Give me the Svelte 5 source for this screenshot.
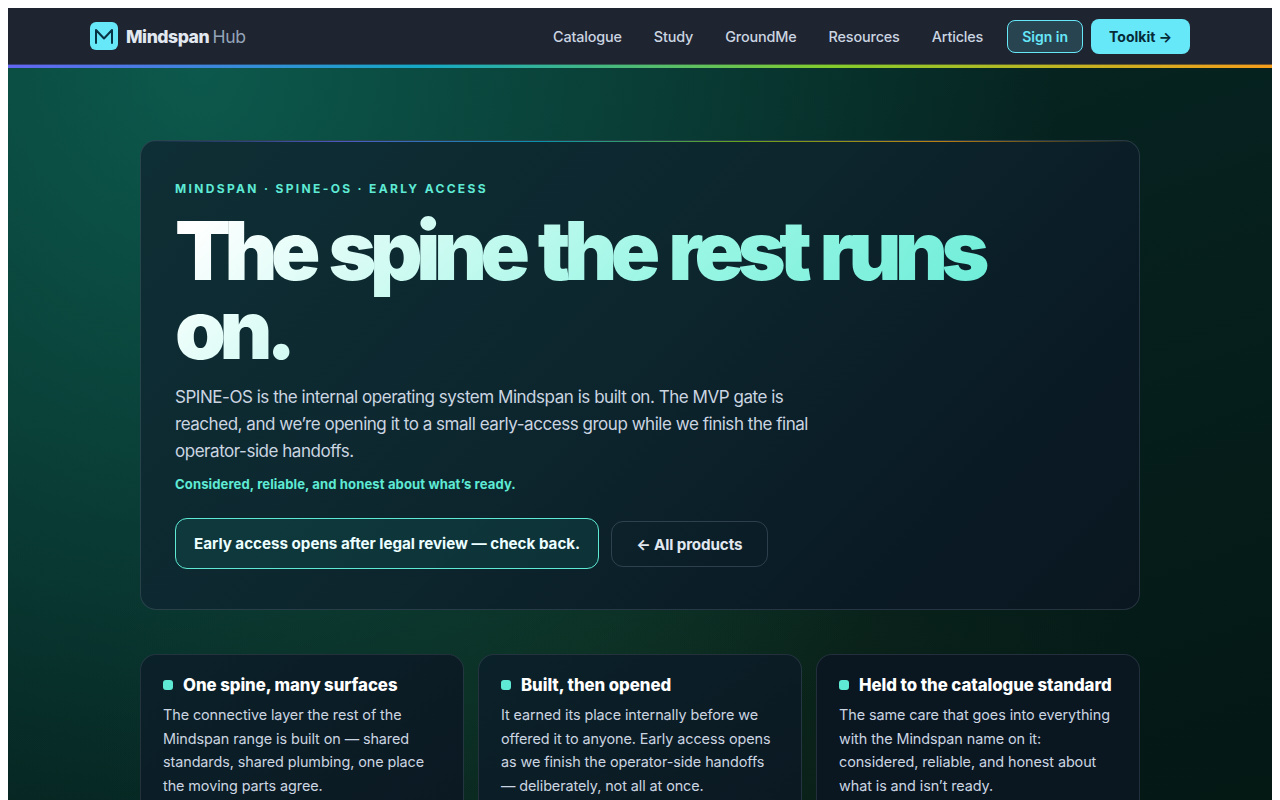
<script>
	const links = ['Catalogue', 'Study', 'GroundMe', 'Resources', 'Articles'];

	const cards = [
		{
			title: 'One spine, many surfaces',
			text: 'The connective layer the rest of the Mindspan range is built on — shared standards, shared plumbing, one place the moving parts agree.'
		},
		{
			title: 'Built, then opened',
			text: 'It earned its place internally before we offered it to anyone. Early access opens as we finish the operator-side handoffs — deliberately, not all at once.'
		},
		{
			title: 'Held to the catalogue standard',
			text: 'The same care that goes into everything with the Mindspan name on it: considered, reliable, and honest about what is and isn’t ready.'
		}
	];
</script>

<div class="page">
	<header>
		<div class="bar">
			<a class="brand" href="/">
				<svg width="28" height="28" viewBox="0 0 28 28" aria-hidden="true">
					<rect width="28" height="28" rx="6" fill="#67e8f9" />
					<path
						d="M6 21V8l8 8.5L22 8v13"
						fill="none"
						stroke="#083344"
						stroke-width="2"
						stroke-linecap="round"
						stroke-linejoin="round"
					/>
				</svg>
				<span class="brand-name">Mindspan <span class="brand-hub">Hub</span></span>
			</a>
			<nav>
				{#each links as link}
					<a class="nav-link" href="/">{link}</a>
				{/each}
				<a class="sign-in" href="/">Sign in</a>
				<a class="toolkit" href="/">Toolkit →</a>
			</nav>
		</div>
	</header>

	<main>
		<section class="hero">
			<p class="eyebrow">Mindspan · SPINE-OS · Early access</p>
			<h1>The spine the rest runs on.</h1>
			<p class="lead">
				SPINE-OS is the internal operating system Mindspan is built on. The MVP gate is reached, and
				we’re opening it to a small early-access group while we finish the final operator-side
				handoffs.
			</p>
			<p class="tagline">Considered, reliable, and honest about what’s ready.</p>
			<div class="actions">
				<span class="status">Early access opens after legal review — check back.</span>
				<a class="ghost" href="/">← All products</a>
			</div>
		</section>

		<section class="cards">
			{#each cards as card}
				<article>
					<h2><span class="dot"></span>{card.title}</h2>
					<p>{card.text}</p>
				</article>
			{/each}
		</section>
	</main>
</div>

<style>
	:global(body) {
		background: #fff;
		overflow: hidden;
	}

	.page {
		box-sizing: border-box;
		height: 800px;
		margin: 0 8px;
		border-top: 8px solid #fff;
		overflow: hidden;
		font-family: Inter, sans-serif;
		color: #e2e8f0;
		background:
			radial-gradient(860px 900px at 15% 8%, rgba(14, 100, 86, 0.8), transparent 100%),
			radial-gradient(520px 420px at 48% 86%, rgba(24, 54, 30, 0.45), transparent 100%),
			linear-gradient(160deg, #062b25 0%, #06201e 50%, #041814 100%);
	}

	a {
		color: inherit;
		text-decoration: none;
	}

	header {
		box-sizing: border-box;
		height: 60px;
		position: relative;
		background: #1e2430;
	}

	header::after {
		content: '';
		position: absolute;
		left: 0;
		right: 0;
		bottom: 0;
		height: 3px;
		border-top: 1px solid rgba(31, 36, 48, 0.6);
		background: linear-gradient(90deg, #6366f1, #14a9c4 33%, #84cc2c 65%, #f59e1b);
		background-origin: border-box;
	}

	.bar {
		width: 1100px;
		height: 56px;
		margin: 0 auto;
		display: flex;
		align-items: center;
		justify-content: space-between;
	}

	.brand {
		display: flex;
		align-items: center;
		gap: 8px;
	}

	.brand-name {
		font-size: 17.6px;
		font-weight: 800;
		letter-spacing: -0.027em;
	}

	.brand-hub {
		font-weight: 400;
		letter-spacing: -0.02em;
		color: #94a3b8;
	}

	nav {
		display: flex;
		align-items: center;
		font-size: 14.4px;
	}

	.nav-link {
		margin-right: 32px;
		font-weight: 500;
		letter-spacing: -0.15px;
		color: #cbd5e1;
	}

	.sign-in {
		margin-left: -8px;
		padding: 7px 14px;
		border: 1px solid #67e8f9;
		border-radius: 8px;
		font-size: 14px;
		font-weight: 600;
		background: rgba(103, 232, 249, 0.17);
		color: #67e8f9;
	}

	.toolkit {
		margin-left: 8px;
		padding: 9px 18px;
		border-radius: 8px;
		font-size: 14px;
		font-weight: 700;
		background: #67e8f9;
		color: #062b38;
	}

	main {
		width: 1000px;
		margin: 72px auto 0;
	}

	.hero {
		box-sizing: border-box;
		height: 470px;
		padding: 40px 34px 0;
		position: relative;
		border: 1px solid rgba(148, 163, 184, 0.2);
		border-radius: 16px;
		background: linear-gradient(135deg, #0e2f35 0%, #0d262e 45%, #0a1a24 80%, #0a1721 100%);
		background-origin: border-box;
	}

	.hero::before {
		content: '';
		position: absolute;
		top: 0;
		left: 0;
		right: 0;
		height: 1px;
		opacity: 0.75;
		background: linear-gradient(90deg, transparent, #6366f1 20%, #06b6d4 40%, #84cc16 60%, #f59e0b 80%, transparent);
	}

	p,
	h1,
	h2 {
		margin: 0;
	}

	.eyebrow {
		font-size: 12px;
		line-height: 15px;
		font-weight: 700;
		letter-spacing: 0.195em;
		text-transform: uppercase;
		color: #5eead4;
	}

	h1 {
		width: 860px;
		margin-top: 15px;
		font-size: 81.6px;
		line-height: 79px;
		font-weight: 900;
		letter-spacing: -0.079em;
		word-spacing: 4.5px;
		background: linear-gradient(135deg, #fff 3%, #99f6e4 55%, #5eead4 100%);
		background-clip: text;
		color: transparent;
	}

	.lead {
		width: 640px;
		margin-top: 15px;
		font-size: 17px;
		line-height: 27px;
		letter-spacing: -0.465px;
		color: #cbd5e1;
	}

	.tagline {
		margin-top: 10px;
		font-size: 13.1px;
		line-height: 18px;
		font-weight: 700;
		letter-spacing: 0.1px;
		color: #5eead4;
	}

	.actions {
		margin-top: 25px;
		display: flex;
		align-items: center;
		gap: 12px;
		font-size: 15.2px;
		font-weight: 700;
		letter-spacing: -0.02px;
	}

	.status {
		padding: 15px 18px;
		line-height: 19px;
		border: 1px solid #5eead4;
		border-radius: 12px;
		background: rgba(20, 120, 110, 0.2);
		color: #ecfeff;
	}

	.ghost {
		padding: 14px 25px 12px 24px;
		line-height: 18px;
		letter-spacing: -0.12px;
		border: 1px solid rgba(148, 163, 184, 0.25);
		border-radius: 12px;
	}

	.cards {
		margin-top: 44px;
		display: grid;
		grid-template-columns: repeat(3, 1fr);
		gap: 14px;
	}

	article {
		height: 190px;
		padding: 20px 22px;
		border: 1px solid rgba(148, 163, 184, 0.18);
		border-radius: 16px;
		background: linear-gradient(145deg, #0b2129, #0b1721);
	}

	article:last-child {
		background: #0a1721;
	}

	h2 {
		display: flex;
		align-items: center;
		gap: 10px;
		font-size: 16.8px;
		line-height: 20px;
		font-weight: 800;
		letter-spacing: -0.05px;
		color: #fff;
	}

	.dot {
		width: 10px;
		height: 10px;
		border-radius: 3px;
		background: #5eead4;
	}

	article p {
		margin-top: 8px;
		font-size: 14.4px;
		line-height: 23.6px;
		letter-spacing: -0.08px;
		color: #cbd5e1;
	}
</style>
